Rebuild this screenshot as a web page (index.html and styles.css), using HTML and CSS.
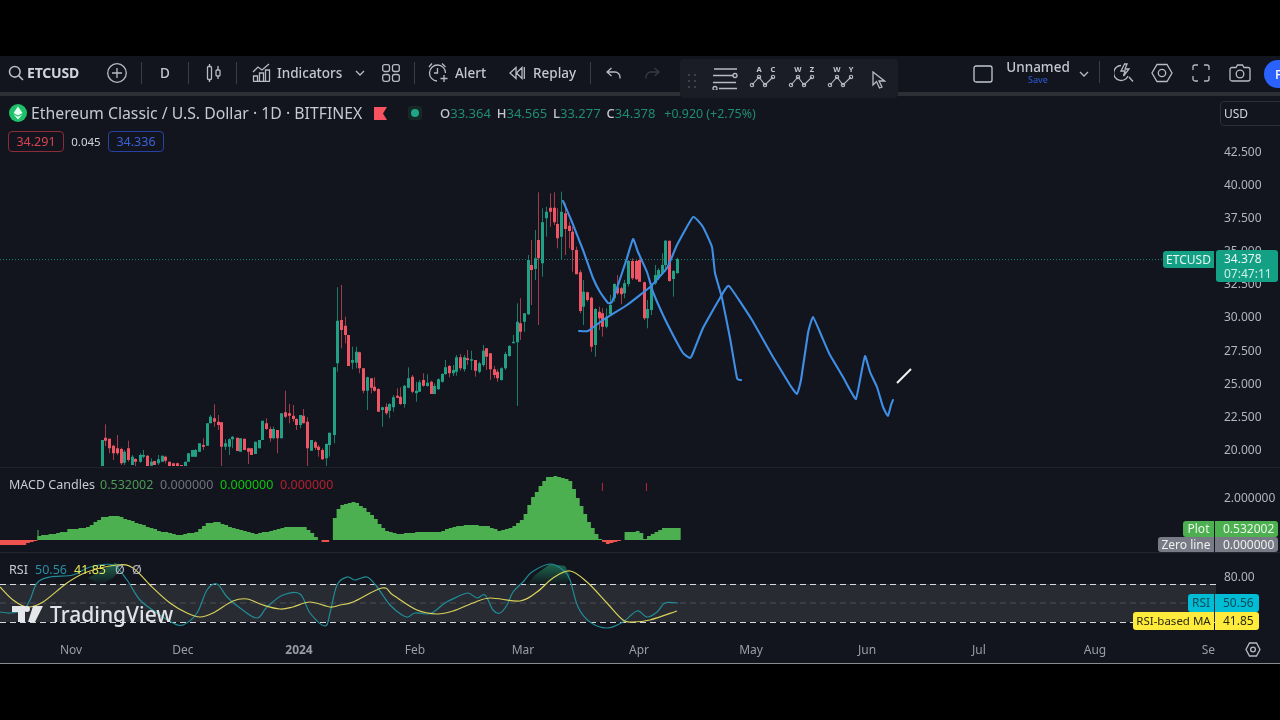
FILE: index.html
```html
<!DOCTYPE html>
<html lang="en">
<head>
<meta charset="utf-8">
<title>ETCUSD chart</title>
<link rel="stylesheet" href="styles.css">
</head>
<body>
<div class="app">
  <header class="toolbar">
    <div class="tool sym">
      <svg class="ic" width="16" height="16" viewBox="0 0 16 16"><circle cx="6.8" cy="6.8" r="5.3"/><path d="M10.6 10.6 15 15"/></svg>
      <b>ETCUSD</b>
    </div>
    <svg class="ic plus" width="20" height="20" viewBox="0 0 20 20"><circle cx="10" cy="10" r="9.3"/><path d="M10 5v10M5 10h10"/></svg>
    <i class="div d1"></i>
    <span class="interval">D</span>
    <i class="div d2"></i>
    <svg class="ic candle" width="16" height="20" viewBox="0 0 16 20"><rect x="1.5" y="3.5" width="4" height="13" rx="1"/><path d="M3.5 1v2.5M3.5 16.500V19M12 3v4M12 13v3"/><rect x="10" y="7" width="4" height="6" rx="1"/></svg>
    <i class="div d3"></i>
    <svg class="ic ind" width="19" height="19" viewBox="0 0 19 19"><path d="M1 9 6 4l4 3 7-6"/><path d="M1.500 18v-5h4v5M7.500 18V10h4v8M13.500 18V7h4v11M1 18.500h17"/></svg>
    <span class="label l-ind">Indicators</span>
    <svg class="ic chev ch1" width="10" height="6" viewBox="0 0 10 6"><path d="m1 1 4 4 4-4"/></svg>
    <svg class="ic grid4" width="18" height="18" viewBox="0 0 18 18"><rect x=".7" y=".7" width="6.800" height="6.800" rx="2"/><rect x="10.500" y=".7" width="6.800" height="6.800" rx="2"/><rect x=".7" y="10.500" width="6.800" height="6.800" rx="2"/><rect x="10.500" y="10.500" width="6.800" height="6.800" rx="2"/></svg>
    <i class="div d4"></i>
    <svg class="ic alert" width="21" height="21" viewBox="0 0 21 21"><path d="M9 19a8 8 0 1 1 8.500-8"/><path d="M9.500 6v5H6M1 5l3-3.500M14 1.500 17.500 5M16 13v7M12.500 16.500h7"/></svg>
    <span class="label l-alert">Alert</span>
    <svg class="ic replay" width="16" height="14" viewBox="0 0 16 14"><path d="M7 1.500 1 7l6 5.500ZM13 1.500 7.500 7l5.500 5.500ZM15.300 1v12"/></svg>
    <span class="label l-replay">Replay</span>
    <i class="div d5"></i>
    <svg class="ic undo" width="15" height="12" viewBox="0 0 15 12"><path d="M5.500 1 1 5l4.500 4M1 5h8a5 5 0 0 1 5 5v1.500"/></svg>
    <svg class="ic redo" width="15" height="12" viewBox="0 0 15 12"><path d="M9.500 1 14 5 9.500 9M14 5H6a5 5 0 0 0-5 5v1.500"/></svg>

    <div class="right">
      <svg class="ic square" width="20" height="18" viewBox="0 0 20 18"><rect x="1" y="1" width="18" height="16" rx="2"/></svg>
      <div class="layout"><span class="lname">Unnamed</span><span class="lsave">Save</span></div>
      <svg class="ic chev ch2" width="10" height="6" viewBox="0 0 10 6"><path d="m1 1 4 4 4-4"/></svg>
      <i class="div d6"></i>
      <svg class="ic bolt" width="20" height="20" viewBox="0 0 20 20"><path d="M7 2.500a7.500 7.500 0 1 0 7 10.500M15 14l4 4.500"/><path d="M10.500 1 7 8h4l-1.500 5 5.500-7h-4l2-5Z"/></svg>
      <svg class="ic hex" width="22" height="20" viewBox="0 0 22 20"><path d="M6 1.500h10l5 8.500-5 8.500H6L1 10Z"/><circle cx="11" cy="10" r="3.700"/></svg>
      <svg class="ic full" width="18" height="18" viewBox="0 0 18 18"><path d="M1 6V3a2 2 0 0 1 2-2h3M12 1h3a2 2 0 0 1 2 2v3M17 12v3a2 2 0 0 1-2 2h-3M6 17H3a2 2 0 0 1-2-2v-3"/></svg>
      <svg class="ic cam" width="22" height="18" viewBox="0 0 22 18"><path d="M3 3.500h4L8.500 1h5L15 3.500h4a2 2 0 0 1 2 2V15a2 2 0 0 1-2 2H3a2 2 0 0 1-2-2V5.500a2 2 0 0 1 2-2Z"/><circle cx="11" cy="10" r="3.800"/></svg>
      <div class="publish">P</div>
    </div>

    <div class="floatbar">
      <svg class="grip" width="8" height="14" viewBox="0 0 8 14"><path d="M0 0h2v2H0zM6 0h2v2H6zM0 6h2v2H0zM6 6h2v2H6zM0 12h2v2H0zM6 12h2v2H6z"/></svg>
      <svg class="ic fb-lines" width="26" height="22" viewBox="0 0 26 22"><path d="M2 1h23M1 7.500h20M1 14.500h23M7 20.500h18"/><circle cx="23" cy="7.500" r="2"/><circle cx="3" cy="20.500" r="2"/></svg>
      <svg class="ic fb-pat" width="28" height="23" viewBox="0 2 28 23"><path d="m3 20 7-8 6 8 8-8"/><circle cx="3" cy="20" r="1.700"/><circle cx="10" cy="12" r="1.700"/><circle cx="16" cy="20" r="1.700"/><circle cx="24" cy="12" r="1.700"/><text x="10" y="7">A</text><text x="24" y="7">C</text></svg>
      <svg class="ic fb-pat" width="28" height="23" viewBox="0 2 28 23"><path d="m3 20 7-8 6 8 8-8"/><circle cx="3" cy="20" r="1.700"/><circle cx="10" cy="12" r="1.700"/><circle cx="16" cy="20" r="1.700"/><circle cx="24" cy="12" r="1.700"/><text x="10" y="7">W</text><text x="24" y="7">Z</text></svg>
      <svg class="ic fb-pat" width="28" height="23" viewBox="0 2 28 23"><path d="m3 20 7-8 6 8 8-8"/><circle cx="3" cy="20" r="1.700"/><circle cx="10" cy="12" r="1.700"/><circle cx="16" cy="20" r="1.700"/><circle cx="24" cy="12" r="1.700"/><text x="10" y="7">W</text><text x="24" y="7">Y</text></svg>
      <svg class="ic fb-cur" width="14" height="18" viewBox="0 0 14 18"><path d="M1 1v13l3.500-3.500 3 6.500 2.500-1-3-6h5.500Z"/></svg>
    </div>
  </header>
  <div class="rule"></div>

  <section class="pane main">
    <svg class="plot" viewBox="0 96 1216 370" width="1216" height="370">
      <path class="lastline" d="M0 259.500H1163"/>
      <g id="candles"></g>
      <path class="draw" d="M563 201 572 222 583 250 593 278 600 292 608 303 612 302 618 285 627 258 633 239 638 252 647 272 653 292 663 315 673 335 683 353 690 358 693 353 703 328 720 298 729 286 752 320 773 357 790 385 797 394 801 380 808 333 813 317 822 337 830 355 843 377 850 390 856 399 860 380 865 356 870 372 877 387 883 407 888 416 891 405 893 400"/>
      <path class="draw" d="M579 331 588 331 603 320 627 305 650 287 667 268 677 245 693 217 703 227 712 247 715 273 722 298 730 338 737 378 741 380"/>
      <path class="pen" d="M897 383 911 369"/>
    </svg>
    <div class="axis prices">
      <span>42.500</span><span>40.000</span><span>37.500</span><span>35.000</span><span>32.500</span><span>30.000</span><span>27.500</span><span>25.000</span><span>22.500</span><span>20.000</span>
    </div>

    <div class="legend">
      <div class="title-row">
        <svg class="coin" width="18" height="18" viewBox="0 0 18 18"><circle cx="9" cy="9" r="9"/><path class="c1" d="M9 2.500 13.500 9 9 11.500 4.500 9Z"/><path class="c1" d="M9 15.500 4.500 10.300 9 12.800l4.500-2.500Z"/></svg>
        <span class="title">Ethereum Classic / U.S. Dollar · 1D · BITFINEX</span>
        <svg class="flag" width="13" height="13" viewBox="0 0 13 13"><path d="M0 0h13l-4 6.500 4 6.500H0Z"/></svg>
        <span class="status"><i></i></span>
        <span class="ohlc"><b>O</b>33.364 <b>H</b>34.565 <b>L</b>33.277 <b>C</b>34.378 <u>+0.920 (+2.75%)</u></span>
      </div>
      <div class="quote-row">
        <span class="qbox sell">34.291</span>
        <span class="spread">0.045</span>
        <span class="qbox buy">34.336</span>
      </div>
    </div>
    <div class="usd">USD<svg class="ic" width="8" height="5" viewBox="0 0 8 5"><path d="m0 0 4 4 4-4"/></svg></div>
    <div class="pricetag">
      <span class="ptname">ETCUSD</span>
      <span class="ptval">34.378<br><small>07:47:11</small></span>
    </div>
  </section>

  <section class="pane macd">
    <svg class="plot" viewBox="0 468 1216 84" width="1216" height="84">
      <g id="hist"></g>
      <path class="hgreen" d="M37.500 540V530h1v10Z"/>
      <path class="htick" d="M602.500 483V491M646.500 483V491"/>
    </svg>
    <div class="axis macd-axis"><span>2.000000</span></div>
    <div class="legend-row ml">
      <span class="lname-i">MACD Candles</span>
      <span class="v-g">0.532002</span><span class="v-n">0.000000</span><span class="v-b">0.000000</span><span class="v-r">0.000000</span>
    </div>
    <div class="tagline tl-plot"><span class="tn">Plot</span><span class="tv">0.532002</span></div>
    <div class="tagline tl-zero"><span class="tn">Zero line</span><span class="tv">0.000000</span></div>
  </section>

  <section class="pane rsi">
    <svg class="plot" viewBox="0 553 1216 81" width="1216" height="81">
      <defs>
        <linearGradient id="obfill" x1="0" y1="0" x2="0" y2="1">
          <stop offset="0" stop-color="#1f6a50"/>
          <stop offset="1" stop-color="#1f6a50" stop-opacity="0"/>
        </linearGradient>
      </defs>
      <rect class="band" x="0" y="584" width="1216" height="38"/>
      <path class="ob" d="M527 585 535 575 550 564 565 566 570 575 567 585Z"/>
      <path class="ob" d="M88 578 115 563 120 565 118 572 113 578 100 585Z"/>
      <path class="dash" d="M0 584.500H1216M0 622.500H1216"/>
      <path class="dash mid" d="M0 603H1216"/>
      <path class="teal" d="M0 612 10 613 23 610 30 600 37 583 50 577 73 575 90 567 113 565 127 580 140 600 157 613 173 623 183 625 197 613 207 590 217 584 227 597 240 608 257 618 267 607 283 595 300 594 310 613 325 626 330 613 337 585 347 577 355 580 367 577 377 587 390 605 402 615 408 617 415 613 428 614 435 611 445 603 457 597 468 593 477 598 485 595 493 610 500 613 507 605 513 592 523 582 532 572 550 564 563 570 570 580 578 607 590 622 607 628 623 622 637 611 647 617 657 612 665 603 678 603"/>
      <path class="yellow" d="M0 587 13 600 27 607 43 602 67 583 87 572 117 565 133 568 150 585 170 603 187 613 200 617 213 613 233 601 247 599 263 605 280 609 293 607 310 602 330 607 340 605 353 602 382 588 393 595 417 610 437 614 453 611 473 603 490 598 520 601 537 592 553 578 570 571 587 582 607 603 623 620 633 622 650 620 677 611"/>
      <g class="wm-logo"><path d="M12 606h13v16h-7V612h-6ZM33 606h10l-8 16h-7ZM27 606a3 3 0 1 1 0 6 3 3 0 0 1 0-6Z"/></g>
    </svg>
    <div class="axis rsi-axis"><span>80.00</span></div>
    <div class="legend-row rl">
      <span class="lname-i">RSI</span><span class="r-t">50.56</span><span class="r-y">41.85</span><span class="r-n">Ø</span><span class="r-n">Ø</span>
    </div>
    <div class="watermark">TradingView</div>
    <div class="tagline tl-rsi"><span class="tn">RSI</span><span class="tv">50.56</span></div>
    <div class="tagline tl-ma"><span class="tn">RSI-based MA</span><span class="tv">41.85</span></div>
  </section>

  <footer class="timeaxis">
    <div class="months">
      <span>Nov</span><span>Dec</span><span class="yr">2024</span><span>Feb</span><span>Mar</span><span>Apr</span><span>May</span><span>Jun</span><span>Jul</span><span>Aug</span><span>Sep</span>
    </div>
    <svg class="ic gear" width="16" height="15" viewBox="0 0 16 15"><path d="M4.500 1h7L15 7.500 11.500 14h-7L1 7.500Z"/><circle cx="8" cy="7.500" r="2.400"/></svg>
  </footer>
</div>
<script src="script.js"></script>
</body>
</html>
```

FILE: styles.css
```css
* { box-sizing: border-box; }
html, body { margin: 0; height: 720px; background: #000; overflow: hidden; }
body { font-family: "Noto Sans", "Open Sans", sans-serif; color: #d1d4dc; }
.app { margin-top: 56px; width: 1280px; height: 608px; background: #12151e; display: flex; flex-direction: column; overflow: hidden; border-bottom: 1px solid #8a8c90; filter: blur(.3px); }

.toolbar { position: relative; height: 36px; flex: none; display: flex; align-items: center; padding: 0 0 3px 8px; background: #12151e; font-size: 13.500px; font-weight: 500; color: #c4c7cf; }
.rule { height: 4px; flex: none; background: #2c2f36; }
.ic { fill: none; stroke: #b8bbc3; stroke-width: 1.300; flex: none; display: block; }
.div { display: block; width: 1px; height: 22px; background: #3a3d46; flex: none; }
.tool.sym { display: flex; align-items: center; gap: 3px; width: 70px; }
.sym .ic { stroke-width: 1.600; }
.sym b { font-size: 14px; font-weight: 700; color: #d1d4dc; letter-spacing: -.2px; }
.plus { margin-left: 29px; }
.d1 { margin-left: 14px; }
.interval { width: 46px; text-align: center; }
.candle { margin-left: 17px; }
.d3 { margin-left: 14px; }
.ind { margin-left: 15px; }
.label { flex: none; white-space: nowrap; }
.l-ind { margin-left: 6px; width: 64px; }
.ch1 { margin-left: 14px; }
.grid4 { margin-left: 17px; }
.d4 { margin-left: 14px; }
.alert { margin-left: 13px; }
.l-alert { margin-left: 6px; width: 32px; }
.replay { margin-left: 22px; }
.l-replay { margin-left: 8px; width: 42px; }
.d5 { margin-left: 15px; }
.undo { margin-left: 15px; }
.redo { margin-left: 24px; stroke: #363a44; }
.right { margin: 2px 0 0 auto; display: flex; align-items: center; }
.square { stroke: #c4c7cf; }
.layout { margin-left: 14px; width: 62px; display: flex; flex-direction: column; align-items: center; line-height: 12px; }
.lname { font-size: 13.500px; color: #c4c7cf; }
.lsave { font-size: 9px; color: #2a55c8; margin-top: 1px; }
.ch2 { margin-left: 10px; }
.d6 { margin-left: 10px; margin-top: -3px; }
.bolt { margin-left: 14px; margin-top: -2px; }
.hex { margin-left: 17px; margin-top: -2px; }
.full { margin-left: 19px; margin-top: -2px; }
.cam { margin-left: 19px; margin-top: -2px; }
.publish { margin-left: 13px; margin-right: -14px; width: 30px; height: 28px; padding-left: 11px; border-radius: 14px; background: #2962ff; color: #fff; font-size: 13px; line-height: 28px; }

.floatbar { position: absolute; left: 680px; top: 3px; width: 218px; height: 39px; padding-left: 8px; display: flex; align-items: center; background: #1a1d26; border-radius: 4px; }
.grip { fill: #3d4049; flex: none; margin-top: 4px; }
.fb-lines { margin-left: 16px; }
.fb-pat { margin-left: 11px; overflow: visible; stroke-width: 1.100; }
.fb-pat text { fill: #c4c7cf; stroke: none; font-size: 7.500px; font-weight: 700; text-anchor: middle; }
.fb-cur { margin-left: 17px; margin-top: 2px; }

.pane { position: relative; display: flex; flex: none; }
.plot { display: block; flex: none; width: 1216px; }
.main { height: 370px; }
.macd { height: 85px; margin-top: 1px; border-top: 1px solid #1e222b; }
.rsi { height: 82px; border-top: 1px solid #23262e; }
.axis { flex: 1; padding-left: 8px; font-size: 12px; color: #b2b5be; display: flex; flex-direction: column; }
.prices { padding-top: 47px; }
.prices span { flex: none; height: 33.100px; line-height: 17px; }
.prices span:last-child { height: 17px; }
.macd-axis { padding-top: 21px; }
.rsi-axis { padding-top: 15px; }

.lastline { stroke: #1e7a66; stroke-width: 1; stroke-dasharray: 1 2; fill: none; }
.wick-g { stroke: #1a7d68; stroke-width: 1; fill: none; }
.wick-r { stroke: #a33c49; stroke-width: 1; fill: none; }
.body-g { fill: #22a085; }
.body-r { fill: #ef5565; }
.draw { fill: none; stroke: #3f8fe6; stroke-width: 2.100; stroke-linejoin: round; stroke-linecap: round; }
.pen { stroke: #f4f4f4; stroke-width: 2; }

.legend { position: absolute; left: 9px; top: 5px; }
.title-row { display: flex; align-items: center; height: 24px; white-space: nowrap; }
.coin { fill: #1ec06a; flex: none; }
.coin .c1 { fill: #e8fff2; }
.title { margin-left: 4px; width: 331px; font-size: 15.800px; color: #c6c9d1; flex: none; }
.flag { margin-left: 12px; fill: #f7525f; flex: none; }
.status { margin-left: 21px; width: 14px; height: 14px; border-radius: 3px; background: #142826; display: flex; align-items: center; justify-content: center; flex: none; }
.status i { width: 8px; height: 8px; border-radius: 50%; background: #1fa587; }
.ohlc { margin-left: 18px; font-size: 13px; word-spacing: 2.500px; color: #1f8c75; white-space: pre; }
.ohlc b { color: #c4c7cf; font-weight: 500; }
.ohlc u { text-decoration: none; margin-left: 3px; word-spacing: 0; font-size: 12.400px; }
.quote-row { display: flex; align-items: center; margin: 6px 0 0 -1px; }
.qbox { width: 56px; height: 21px; border-radius: 4px; border: 1px solid; text-align: center; font-size: 12.500px; line-height: 19px; }
.sell { border-color: #8c2c38; color: #d8434f; }
.buy { border-color: #2741a5; color: #3a62d8; }
.spread { width: 44px; text-align: center; font-size: 11.500px; color: #d1d4dc; }
.usd { position: absolute; left: 1220px; top: 5px; width: 70px; height: 25px; border: 1px solid #2c2f38; border-radius: 4px; padding-left: 3px; font-size: 12px; line-height: 23px; display: flex; align-items: center; gap: 33px; }

.pricetag { position: absolute; left: 1163px; top: 154px; display: flex; align-items: flex-start; gap: 2px; font-size: 12px; color: #e8f5f2; }
.ptname { width: 51px; height: 17px; margin-top: 1px; line-height: 17px; background: #14a085; border-radius: 3px 0 0 3px; text-align: center; }
.ptval { width: 62px; height: 32px; line-height: 15px; padding: 1px 0 0 8px; background: #14a085; border-radius: 3px; }
.ptval small { font-size: 12px; color: #cdeee6; }

.legend-row { position: absolute; left: 9px; display: flex; font-size: 12.500px; white-space: nowrap; }
.ml { top: 8px; gap: 6px; }
.ml .lname-i { width: 85px; color: #c8cbd3; }
.v-g, .v-n, .v-b, .v-r { width: 54px; }
.v-g { color: #4f9a55; }
.v-n { color: #70737c; }
.v-b { color: #0cc60c; }
.v-r { color: #b2202f; }
.rl { top: 8px; }
.rl .lname-i { width: 26px; color: #c8cbd3; }
.r-t { width: 39px; color: #2b8fa5; }
.r-y { width: 41px; color: #e6e65a; }
.r-n { width: 17px; color: #b2b5be; }

.tagline { position: absolute; display: flex; right: 2px; gap: 1px; font-size: 12px; line-height: 16px; height: 16px; }
.tl-plot { top: 53px; }
.tl-zero { top: 69px; height: 15px; line-height: 15px; }
.tl-rsi { top: 41px; right: 21px; height: 18px; line-height: 18px; }
.tl-ma { top: 59px; right: 21px; height: 18px; line-height: 18px; }
.tn { text-align: center; white-space: nowrap; border-radius: 3px 0 0 3px; }
.tv { padding-left: 8px; border-radius: 0 3px 3px 0; }
.tl-plot .tn, .tl-plot .tv { background: #4caf50; color: #eaf6ea; }
.tl-plot .tn { width: 31px; }
.tl-plot .tv { width: 63px; }
.tl-zero .tn, .tl-zero .tv { background: #787b86; color: #f0f0f0; }
.tl-zero .tn { width: 56px; }
.tl-zero .tv { width: 63px; }
.tl-rsi .tn, .tl-rsi .tv { background: #00bcd4; color: #0c4a58; }
.tl-rsi .tn { width: 26px; }
.tl-rsi .tv { width: 44px; }
.tl-ma .tn, .tl-ma .tv { background: #ffeb3b; color: #2a2a10; }
.tl-ma .tn { width: 81px; font-size: 11.500px; }
.tl-ma .tv { width: 44px; }

.band { fill: #292b33; }
.ob { fill: url(#obfill); }
.dash { fill: none; stroke: #d8d9dd; stroke-width: 1; stroke-dasharray: 6 4; }
.dash.mid { stroke: #4c4e56; }
.teal { fill: none; stroke: #1f8c96; stroke-width: 1.200; }
.yellow { fill: none; stroke: #d8d25a; stroke-width: 1.200; }
.wm-logo { fill: #e6e7ea; }
.watermark { position: absolute; left: 50px; top: 47px; font-size: 21px; line-height: 28px; font-weight: 500; color: #e2e3e7; }
.hgreen { fill: #4caf50; }
.hred { fill: #ef5350; }
.htick { stroke: #b0263a; stroke-width: 1; fill: none; }

.timeaxis { position: relative; flex: 1; display: flex; align-items: center; font-size: 12px; color: #9a9da6; }
.months { width: 1216px; display: grid; grid-template-columns: 112px 112px 120px 112px 104px 128px 96px 136px 88px 144px 90px; padding-left: 15px; text-align: center; overflow: hidden; margin-top: 1px; }
.yr { font-weight: 700; }
.gear { margin-left: 29px; margin-top: 1px; }
```

FILE: script.js
```js
// Candles read per pane segment: [ox, oy, rows]; rows are "c x wickTop wickBottom bodyTop bodyBottom" at 3x scale.
var segments = [
  [90, 280, "g 35 480 558 480 558;r 46 433 498 473 482;r 58 476 520 476 505;r 69 495 540 497 520;r 80 465 525 505 520;r 92 503 555 507 550;g 103 510 555 515 548;r 115 482 545 505 540;g 127 525 555 530 555;r 136 535 560 537 545;g 150 520 548 525 545;g 158 510 535 525 530;r 170 525 560 527 558;g 182 535 560 545 557;r 192 543 555 543 555;g 204 525 555 538 550;g 215 527 545 527 545;r 226 527 550 530 542;r 238 545 560 545 560;r 250 550 560 550 560;r 260 548 560 550 560;r 272 555 560 555 560;g 284 545 560 545 560;g 293 520 545 520 545;g 305 510 530 510 530;g 316 507 530 510 530;g 327 490 515 490 515;r 338 475 510 495 500;g 350 430 497 430 497;g 360 405 430 410 430;r 372 373 440 415 425;r 384 405 450 425 435;r 394 427 560 427 500;g 406 478 510 490 500;g 416 475 525 478 500;g 427 468 505 470 478;r 440 473 513 473 513;g 450 475 515 475 515;r 462 476 510 476 510;r 473 503 552 505 515;r 484 505 525 505 525;g 495 485 522 485 522;g 507 480 505 480 505;g 517 422 480 422 480;r 529 415 450 430 447;r 541 440 485 447 475;g 550 440 478 447 475;r 562 450 520 450 475;g 574 400 475 400 475;r 585 332 415 397 410;r 597 372 430 400 407;r 608 375 425 407 417;r 618 415 450 417 435;g 630 405 445 405 435;r 640 387 430 407 430;r 652 412 558 425 505;g 663 480 512 480 512;r 674 482 510 487 503;r 685 495 530 500 510;r 697 505 540 510 538;g 707 490 558 492 535;g 718 458 530 458 495;g 731 262 490 262 465;g 741 22 275 122 250;r 752 15 205 120 150;r 764 110 190 137 165"],
  [340, 280, "r 25 165 258 165 258;g 37 200 268 240 248;g 47 200 265 215 248;r 58 215 280 217 265;r 70 265 340 265 332;g 82 290 390 292 332;r 92 295 340 295 323;r 103 292 335 320 332;r 115 325 395 327 395;g 127 380 440 382 390;r 137 370 405 380 400;g 147 370 415 372 392;g 158 345 395 352 382;r 171 325 355 347 353;r 181 322 375 350 372;g 193 315 383 317 372;g 205 262 325 295 323;r 215 285 340 290 335;g 227 305 365 332 340;g 238 300 335 307 335;r 248 280 320 300 317;g 260 283 320 308 318;r 272 302 342 305 342;g 282 310 343 318 342;g 294 295 330 298 328;g 306 280 308 282 305;g 316 240 285 262 282;r 327 255 292 258 280;g 339 255 288 270 280;g 349 225 287 232 275;r 361 222 272 232 265;g 372 225 275 232 268;r 382 210 255 235 240;g 394 212 270 238 242;r 404 240 290 240 272;g 416 245 280 250 275;g 428 195 260 212 255;r 439 205 270 205 230;r 451 220 300 220 268;r 462 258 295 268 285;r 472 268 305 275 295;g 484 262 302 265 300;g 496 215 270 222 265;g 506 195 230 198 228;g 518 165 190 185 190;g 530 70 378 125 187"],
  [500, 185, "r 60 340 465 415 440;g 72 385 440 385 410;g 84 210 390 225 388;r 94 165 360 240 255;g 105 135 285 220 252;r 115 22 420 165 220;g 127 70 275 112 235;g 138 65 155 80 100;r 149 25 125 68 80;r 161 22 120 68 112;r 172 70 190 117 160;g 183 20 225 80 155;r 195 55 210 85 132;r 206 110 190 122 138;r 217 125 260 140 195;r 228 185 265 195 268;r 240 255 385 262 378;g 250 285 420 320 365;r 262 320 350 322 345;r 274 335 500 338 485;g 284 370 515 372 480;r 296 365 435 380 400;r 307 370 455 385 425;g 318 370 430 395 425;g 329 330 390 360 388;g 341 295 350 297 340;r 352 270 330 307 325;r 363 305 358 310 328;g 373 285 340 295 325;g 385 225 305 228 297;r 396 220 285 228 280;r 407 225 285 228 283;r 418 220 290 225 290;r 431 290 405 292 400;g 441 345 430 372 400;g 452 295 390 298 375;g 464 240 300 270 295;g 475 250 285 255 280;g 485 205 270 240 265;g 496 165 260 167 240;r 507 167 290 167 288;g 520 255 335 258 282;g 531 218 265 222 265"]
];

var NS = "http://www.w3.org/2000/svg";

function add(host, cls, d) {
  var el = document.createElementNS(NS, "path");
  el.setAttribute("class", cls);
  el.setAttribute("d", d);
  host.appendChild(el);
}

var candles = document.getElementById("candles");
var wicks = { g: "", r: "" };
var bodies = { g: "", r: "" };
segments.forEach(function (seg) {
  seg[2].split(";").forEach(function (row) {
    var p = row.split(" ");
    var c = p[0];
    var x = Math.round(seg[0] + p[1] / 3);
    var y = function (v) { return (seg[1] + v / 3).toFixed(1); };
    wicks[c] += "M" + (x + 0.5) + " " + y(+p[2]) + "V" + y(+p[3]);
    bodies[c] += "M" + (x - 1) + " " + y(+p[4]) + "h3V" + y(+p[5]) + "h-3Z";
  });
});
add(candles, "wick-g", wicks.g);
add(candles, "wick-r", wicks.r);
add(candles, "body-g", bodies.g);
add(candles, "body-r", bodies.r);

// Histogram: outline points sampled into one bar per day.
var BASE = 540;
var DAY = 3.74;
var outline = [[0,545],[23,545],[37,540],[38,536],[65,532],[70,529],[87,528],[103,517],[117,516],[130,520],[143,525],[160,531],[180,535],[197,532],[208,523],[218,522],[230,527],[257,534],[270,531],[287,527],[305,527],[320,540],[326,543],[331,540],[332,530],[335,517],[340,505],[355,502],[363,507],[372,515],[385,530],[400,534],[420,532],[440,532],[453,527],[468,525],[487,526],[500,531],[512,528],[523,519],[533,497],[547,477],[557,476],[570,480],[580,503],[588,520],[600,539],[607,544],[623,540],[624,532],[633,532],[640,531],[645,539],[650,535],[663,528],[679,528]];

function at(x) {
  for (var i = 1; i < outline.length; i++) {
    if (x <= outline[i][0]) {
      var a = outline[i - 1], b = outline[i];
      return a[1] + (b[1] - a[1]) * (x - a[0]) / (b[0] - a[0]);
    }
  }
  return BASE;
}
var hist = document.getElementById("hist");
var green = "", red = "";
for (var x = 0; x < 678; x += DAY) {
  var y = Math.round(at(x + DAY / 2));
  var bar = "M" + x.toFixed(2) + " " + BASE + "V" + y + "H" + (x + DAY).toFixed(2) + "V" + BASE + "Z";
  if (y > BASE) { red += bar; } else { green += bar; }
}
add(hist, "hgreen", green);
add(hist, "hred", red);

// Smooth the RSI lines and slightly the hand-drawn ones.
function smooth(el, k) {
  var n = el.getAttribute("d").match(/[\d.]+/g).map(Number);
  var pts = [];
  for (var i = 0; i < n.length; i += 2) { pts.push([n[i], n[i + 1]]); }
  var d = "M" + pts[0][0] + " " + pts[0][1];
  for (var j = 0; j < pts.length - 1; j++) {
    var p0 = pts[Math.max(j - 1, 0)], p1 = pts[j], p2 = pts[j + 1], p3 = pts[Math.min(j + 2, pts.length - 1)];
    d += "C" + (p1[0] + (p2[0] - p0[0]) * k).toFixed(1) + " " + (p1[1] + (p2[1] - p0[1]) * k).toFixed(1) +
         " " + (p2[0] - (p3[0] - p1[0]) * k).toFixed(1) + " " + (p2[1] - (p3[1] - p1[1]) * k).toFixed(1) +
         " " + p2[0] + " " + p2[1];
  }
  el.setAttribute("d", d);
}
document.querySelectorAll(".teal, .yellow").forEach(function (el) { smooth(el, 0.17); });
document.querySelectorAll(".draw").forEach(function (el) { smooth(el, 0.06); });
```
